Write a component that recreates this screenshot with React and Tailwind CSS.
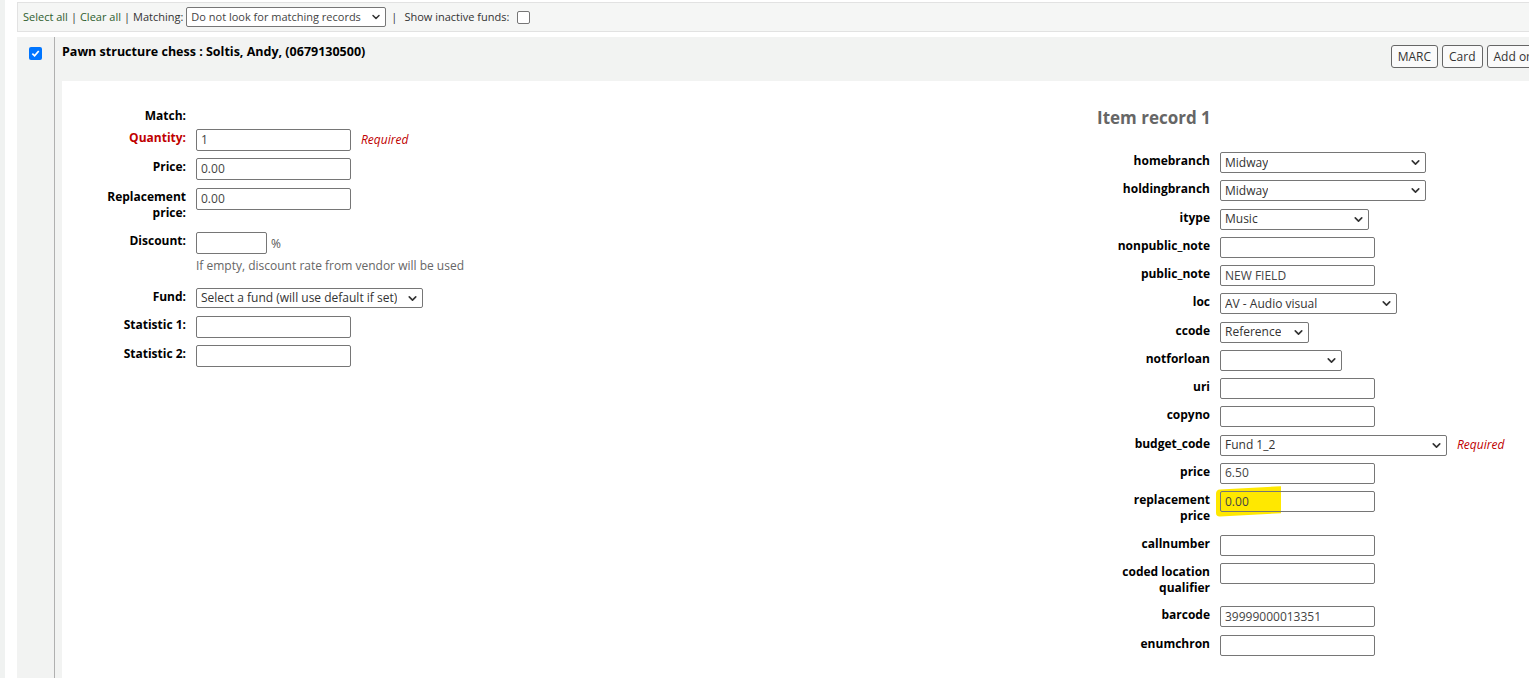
import { ChevronDown } from 'lucide-react'

// left column form rows
const leftRows = [
  { label: 'Match:', kind: 'none', mb: 'mb-[5px]' },
  { label: 'Quantity:', kind: 'input', value: '1', w: 'w-[155px]', required: true, red: true, mb: 'mb-[7px]' },
  { label: 'Price:', kind: 'input', value: '0.00', w: 'w-[155px]', mb: 'mb-[8px]' },
  { label: ['Replacement', 'price:'], kind: 'input', value: '0.00', w: 'w-[155px]', mb: 'mb-[11px]' },
  { label: 'Discount:', kind: 'discount', mb: 'mb-[14px]' },
  { label: 'Fund:', kind: 'select', value: 'Select a fund (will use default if set)', w: 'w-[227px]', mb: 'mb-[8px]' },
  { label: 'Statistic 1:', kind: 'input', value: '', w: 'w-[155px]', mb: 'mb-[7px]' },
  { label: 'Statistic 2:', kind: 'input', value: '', w: 'w-[155px]', mb: 'mb-[7px]' },
]

// item record fields on the right
const itemRows = [
  { label: 'homebranch', kind: 'select', value: 'Midway', w: 'w-[206px]' },
  { label: 'holdingbranch', kind: 'select', value: 'Midway', w: 'w-[206px]' },
  { label: 'itype', kind: 'select', value: 'Music', w: 'w-[149px]' },
  { label: 'nonpublic_note', kind: 'input', value: '', w: 'w-[155px]' },
  { label: 'public_note', kind: 'input', value: 'NEW FIELD', w: 'w-[155px]' },
  { label: 'loc', kind: 'select', value: 'AV - Audio visual', w: 'w-[177px]' },
  { label: 'ccode', kind: 'select', value: 'Reference', w: 'w-[89px]' },
  { label: 'notforloan', kind: 'select', value: '', w: 'w-[122px]' },
  { label: 'uri', kind: 'input', value: '', w: 'w-[155px]' },
  { label: 'copyno', kind: 'input', value: '', w: 'w-[155px]' },
  { label: 'budget_code', kind: 'select', value: 'Fund 1_2', w: 'w-[227px]', required: true },
  { label: 'price', kind: 'input', value: '6.50', w: 'w-[155px]' },
  { label: ['replacement', 'price'], kind: 'input', value: '0.00', w: 'w-[155px]', marked: true },
  { label: 'callnumber', kind: 'input', value: '', w: 'w-[155px]' },
  { label: ['coded location', 'qualifier'], kind: 'input', value: '', w: 'w-[155px]' },
  { label: 'barcode', kind: 'input', value: '39999000013351', w: 'w-[155px]' },
  { label: 'enumchron', kind: 'input', value: '', w: 'w-[155px]' },
]

function TextBox({ value, w, h = 'h-[21px]' }) {
  return (
    <div className={`${w} ${h} border border-[#767676] rounded-[2px] bg-white px-[4px] flex items-center text-[12px] text-[#444]`}>
      {value}
    </div>
  )
}

function SelectBox({ value, w, h = 'h-[21px]' }) {
  return (
    <div className={`${w} ${h} border border-[#767676] rounded-[2px] bg-white pl-[4px] pr-[3px] flex items-center justify-between text-[12px] text-[#333]`}>
      <span className="truncate">{value}</span>
      <ChevronDown size={13} strokeWidth={3} className="text-[#333] shrink-0" />
    </div>
  )
}

function Required() {
  return <span className="italic text-[12px] text-[#c00000] ml-[10px]">Required</span>
}

function Label({ label, width, red }) {
  const lines = Array.isArray(label) ? label : [label]
  return (
    <div className={`${width} shrink-0 text-right font-bold text-[12px] leading-[16px] pt-[1px] ${red ? 'text-[#c00000]' : 'text-black'}`}>
      {lines.map((l, i) => <div key={i}>{l}</div>)}
    </div>
  )
}

function LeftForm() {
  return (
    <div className="w-[1035px] shrink-0 pt-[26px]">
      {leftRows.map((row, i) => (
        <div key={i} className={`flex items-start gap-[10px] ${row.mb}`}>
          <Label label={row.label} width="w-[124px]" red={row.red} />
          {row.kind === 'input' && (
            <div className="flex items-center">
              <TextBox value={row.value} w={row.w} h="h-[22px]" />
              {row.required && <Required />}
            </div>
          )}
          {row.kind === 'select' && <SelectBox value={row.value} w={row.w} h="h-[20px]" />}
          {row.kind === 'discount' && (
            <div>
              <div className="flex items-center">
                <TextBox value="" w="w-[71px]" h="h-[22px]" />
                <span className="text-[12px] text-[#555] ml-[4px] mt-[2px]">%</span>
              </div>
              <div className="text-[12px] text-[#666] mt-[4px] leading-[16px]">
                If empty, discount rate from vendor will be used
              </div>
            </div>
          )}
        </div>
      ))}
    </div>
  )
}

function ItemRecord() {
  return (
    <div className="pt-[27px]">
      <h3 className="text-[17px] font-bold text-[#666] leading-[20px] mb-[24px]">Item record 1</h3>
      {itemRows.map((row, i) => {
        const twoLine = Array.isArray(row.label)
        return (
          <div key={i} className={`flex items-start gap-[10px] min-h-[21px] ${twoLine ? 'mb-[10.5px]' : 'mb-[7.25px]'}`}>
            <Label label={row.label} width="w-[113px]" />
            <div className="flex items-center">
              {row.kind === 'input' ? (
                <div className="relative">
                  {/* yellow highlighter stroke over the field */}
                  {row.marked && (
                    <div className="absolute left-[-4px] top-[-3px] w-[65px] h-[27px] bg-[#ffe800] rounded-l-[4px] -skew-y-3" />
                  )}
                  <div className="relative">
                    {row.marked ? (
                      <div className={`${row.w} h-[21px] border border-[#767676] rounded-[2px] px-[4px] flex items-center text-[12px] text-[#444] bg-gradient-to-r from-[#ffe800] from-[39%] to-white to-[39%]`}>
                        {row.value}
                      </div>
                    ) : (
                      <TextBox value={row.value} w={row.w} />
                    )}
                  </div>
                </div>
              ) : (
                <SelectBox value={row.value} w={row.w} />
              )}
              {row.required && <Required />}
            </div>
          </div>
        )
      })}
    </div>
  )
}

export default function App() {
  return (
    <div className="w-[1529px] h-[678px] overflow-hidden bg-white flex" style={{ fontFamily: '"Open Sans", "Noto Sans", sans-serif' }}>
      {/* page edge strip */}
      <div className="w-[5px] shrink-0 bg-[#f0f2f1]" />

      <div className="w-[1552px] shrink-0 pl-[12px] pt-[2px]">
        {/* toolbar */}
        <div className="h-[30px] border border-[#e2e2e2] bg-[#f5f6f5] flex items-center pl-[5px] text-[11px] text-[#333] whitespace-nowrap">
          <span className="text-[#2e5e2e]">Select all</span>
          <span className="mx-[3px]">|</span>
          <span className="text-[#2e5e2e]">Clear all</span>
          <span className="mx-[3px]">|</span>
          <span>Matching:</span>
          <div className="ml-[3px] w-[200px] h-[20px] border border-[#767676] rounded-[2px] bg-white pl-[4px] pr-[3px] flex items-center justify-between text-[#444]">
            <span>Do not look for matching records</span>
            <ChevronDown size={12} strokeWidth={3} className="text-[#333]" />
          </div>
          <span className="ml-[5px] mr-[7px]">|</span>
          <span>Show inactive funds:</span>
          <div className="ml-[8px] w-[13px] h-[13px] border border-[#767676] rounded-[2px] bg-white" />
        </div>

        {/* order row */}
        <div className="mt-[5px] bg-[#f2f3f2] flex h-[700px]">
          <div className="w-[38px] shrink-0 border-r border-[#b0b0b0] pl-[12px] pt-[10px]">
            <div className="w-[13px] h-[13px] rounded-[2px] bg-[#0075ff] flex items-center justify-center">
              <svg width="9" height="9" viewBox="0 0 10 10">
                <path d="M1.5 5.2 L4 7.6 L8.6 2.2" fill="none" stroke="white" strokeWidth="1.9" />
              </svg>
            </div>
          </div>

          <div className="flex-1 pl-[7px] flex flex-col">
            <div className="h-[44px] flex items-start justify-between pt-[7px]">
              <span className="font-bold text-[12.5px] text-black leading-[16px]">
                Pawn structure chess : Soltis, Andy, (0679130500)
              </span>
              <div className="flex gap-[4px] pt-[1px]">
                {['MARC', 'Card', 'Add order'].map((b) => (
                  <div key={b} className="h-[23px] px-[6px] border border-[#666] rounded-[3px] bg-[#fafafa] flex items-center text-[12px] text-[#333]">
                    {b}
                  </div>
                ))}
              </div>
            </div>

            <div className="flex-1 bg-white flex">
              <LeftForm />
              <ItemRecord />
            </div>
          </div>
        </div>
      </div>
    </div>
  )
}
